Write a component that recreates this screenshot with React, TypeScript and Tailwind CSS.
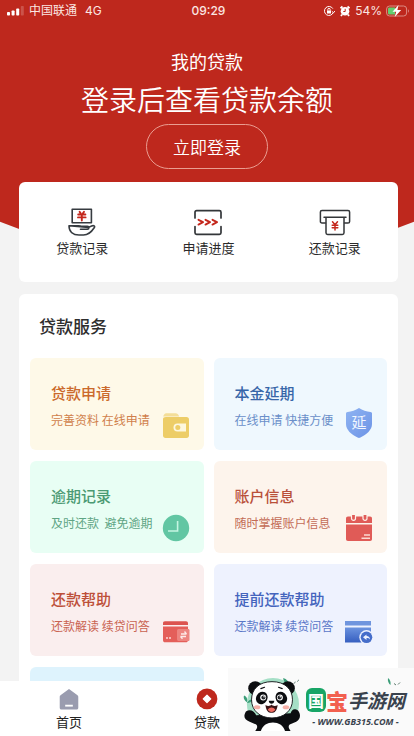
import React from "react";

type Service = {
  title: string;
  desc: string;
  tile: string;
  titleColor: string;
  descColor: string;
  icon: React.ReactNode;
};

const LoanRecordIcon = () => (
  <svg viewBox="0 0 28 28" className="h-7 w-7" fill="none" stroke="#363b40" strokeWidth="1.6" strokeLinejoin="round" strokeLinecap="round">
    <path d="M4.2 14.8V1.2h19.2v13.6z" />
    <path d="M1 17.800h9.500c1.600 0 2 .6 3.200.6h5.800c1.800 0 1.800 2.900 0 2.900h-7M20.600 19.400l3-1.400c2.200-1 3.700.2 2.600 1.800C23.500 24 20.500 27 15.500 27H11C5 27 1 23.800 1 17.800z" />
    <path d="M11.600 3.800l1.200 1.800M16 3.800l-1.200 1.800M10.200 6.500h7.200M10 9.400h7.600M13.800 6.500v6" stroke="#c4281d" strokeWidth="1.900" />
  </svg>
);

const ProgressIcon = () => (
  <svg viewBox="0 0 28 28" className="h-7 w-7" fill="none" stroke="#333639" strokeWidth="1.7" strokeLinecap="round" strokeLinejoin="round">
    <path d="M1 10V4.200c0-1 .6-1.600 1.600-1.600h22.800c1 0 1.600.6 1.600 1.600V10M1 18.500v6.300c0 1 .6 1.600 1.600 1.600h22.800c1 0 1.600-.6 1.600-1.600v-6.300" />
    <path d="M4.500 11.800l4.500 2.400-4.500 2.400M11.500 11.800l4.500 2.400-4.500 2.400M18.500 11.800l4.500 2.400-4.500 2.400" stroke="#c4281d" strokeWidth="1.9" />
  </svg>
);

const RepayRecordIcon = () => (
  <svg viewBox="0 0 32 28" className="h-7 w-8" fill="none" stroke="#333639" strokeWidth="1.500" strokeLinejoin="round" strokeLinecap="round">
    <path d="M6.500 15H3c-1 0-1.600-.6-1.600-1.600V4c0-1 .6-1.600 1.600-1.600h26c1 0 1.600.6 1.600 1.600v9.400c0 1-.6 1.600-1.600 1.600h-3.500" />
    <path d="M5 9.200h22M7 9.200v15.600c0 1 .6 1.600 1.600 1.600h14.800c1 0 1.600-.6 1.600-1.600V9.200" />
    <path d="M13.500 13.800l2.500 3 2.500-3M13.200 17.200h5.600M13.200 19.800h5.600M16 17v5" stroke="#c4281d" strokeWidth="1.500" />
  </svg>
);

const WalletIcon = () => (
  <svg viewBox="0 0 28 28" className="h-7 w-7">
    <path d="M1.200 5.500c.5-2 1.400-3.300 3-3.300h9.400c1.600 0 2.800 1 3.600 3.300z" fill="#f4de98" />
    <path d="M4 6h20.500c1.600 0 2.500.9 2.500 2.500V24.500c0 1.600-.9 2.500-2.500 2.500H3.500C1.900 27 1 26.100 1 24.500V8c0-1.200 1-2 3-2z" fill="#edcd67" />
    <path d="M15.500 12.500H24v8h-8.500a4 4 0 010-8z" fill="#fdf7de" />
    <circle cx="15.800" cy="16.500" r="2.500" fill="#edcd67" />
  </svg>
);

const ShieldIcon = () => (
  <svg viewBox="0 0 28 32" className="h-8 w-7">
    <defs>
      <linearGradient id="shield" x1="0" y1="0" x2="1" y2="1">
        <stop offset="0" stopColor="#8fb4f2" />
        <stop offset="1" stopColor="#6c93e6" />
      </linearGradient>
    </defs>
    <path d="M14 1c3.500 2.200 7.500 3.500 11.500 4 1 .1 1.500.7 1.500 1.600V17c0 6-5.500 10.500-11.600 13.600-1 .5-1.800.5-2.800 0C6.500 27.500 1 23 1 17V6.600C1 5.700 1.500 5.100 2.500 5 6.500 4.500 10.500 3.200 14 1z" fill="url(#shield)" />
    <text x="14" y="21" textAnchor="middle" fontSize="15" fill="#f2f7ff">延</text>
  </svg>
);

const ClockIcon = () => (
  <svg viewBox="0 0 28 28" className="h-7 w-7">
    <circle cx="14" cy="14" r="13.200" fill="#62c6a3" />
    <path d="M15.600 7v10H6" fill="none" stroke="#c5f5e2" strokeWidth="1.600" />
  </svg>
);

const CalendarIcon = () => (
  <svg viewBox="0 0 28 28" className="h-7 w-7">
    <path d="M3 2.500h22c1.300 0 2 .7 2 2V9H1V4.500c0-1.300.7-2 2-2z" fill="#e05b57" />
    <path d="M1 10.500h26V25c0 1.300-.7 2-2 2H3c-1.300 0-2-.7-2-2z" fill="#e05b57" />
    <path d="M6.500 1v3.500c0 2.500 4 2.500 4 0V1M18 1v3.500c0 2.500 4 2.500 4 0V1" fill="#e05b57" stroke="#fdf3ec" strokeWidth="1.200" />
    <path d="M19 21h6M16.500 24.300H25" stroke="#fbd9d2" strokeWidth="1.500" />
  </svg>
);

const CardIcon = () => (
  <svg viewBox="0 0 28 28" className="h-7 w-7">
    <path d="M1 6.500C1 5 1.500 4.200 3 4.200h21c1.200 0 2 .8 2 2.300V8H1z" fill="#dc5450" />
    <path d="M1 9.500h25V23c0 1.500-.8 2.300-2.300 2.300H3.200C1.700 25.300 1 24.500 1 23z" fill="#e45f5a" />
    <path d="M17 12h9c1 0 1.500.6 1.500 1.500v9c0 1-.5 1.500-1.500 1.500h-9c-1.300 0-2-.6-2-2v-8c0-1.400.7-2 2-2z" fill="#ed8580" />
    <path d="M24.500 17H19m3.500-2.500l2 2.500M18.500 19.500H24m-3.500 2.300l-2-2.300" fill="none" stroke="#fdebe8" strokeWidth="1.300" />
    <path d="M4 21h2M7 21h2" stroke="#fbd9d6" strokeWidth="1.400" />
  </svg>
);

const RepayCardIcon = () => (
  <svg viewBox="0 0 28 28" className="h-7 w-7">
    <defs>
      <linearGradient id="repay" x1="0" y1="0" x2="0" y2="1">
        <stop offset="0" stopColor="#6b93df" />
        <stop offset="1" stopColor="#365fc0" />
      </linearGradient>
    </defs>
    <path d="M0 4h26v4.500H0z" fill="#6f95de" />
    <path d="M0 10.500h26V25.500H0z" fill="url(#repay)" />
    <circle cx="21.500" cy="20.300" r="7.200" fill="#eef2ff" />
    <circle cx="21.500" cy="20.300" r="5.800" fill="#456dca" />
    <path d="M21.500 17.500l-3.500 2.700 3.500 2.700v-1.800c1.600 0 2.800.3 3.500 1.500 0-2.500-1.300-3.500-3.500-3.600z" fill="#eef2ff" />
  </svg>
);

const services: Service[] = [
  { title: "贷款申请", desc: "完善资料 在线申请", tile: "bg-[#fef9e8]", titleColor: "text-[#cb6a2c]", descColor: "text-[#d07f4b]", icon: <WalletIcon /> },
  { title: "本金延期", desc: "在线申请 快捷方便", tile: "bg-[#eff8fe]", titleColor: "text-[#3766a8]", descColor: "text-[#6a8fc9]", icon: <ShieldIcon /> },
  { title: "逾期记录", desc: "及时还款  避免逾期", tile: "bg-[#e8fef4]", titleColor: "text-[#4b9a73]", descColor: "text-[#5fa584]", icon: <ClockIcon /> },
  { title: "账户信息", desc: "随时掌握账户信息", tile: "bg-[#fdf4ec]", titleColor: "text-[#b9503a]", descColor: "text-[#c36c57]", icon: <CalendarIcon /> },
  { title: "还款帮助", desc: "还款解读 续贷问答", tile: "bg-[#faeeee]", titleColor: "text-[#bd4f38]", descColor: "text-[#c96351]", icon: <CardIcon /> },
  { title: "提前还款帮助", desc: "还款解读 续贷问答", tile: "bg-[#eef2fe]", titleColor: "text-[#4464bd]", descColor: "text-[#5a77c8]", icon: <RepayCardIcon /> },
];

const quickActions = [
  { label: "贷款记录", icon: <LoanRecordIcon /> },
  { label: "申请进度", icon: <ProgressIcon /> },
  { label: "还款记录", icon: <RepayRecordIcon /> },
];

const StatusBar = () => (
  <div className="grid h-[22px] grid-cols-3 items-center pr-1 pl-[7px] font-['Inter','Noto_Sans_CJK_SC',sans-serif] text-xs text-[#fbe6e2]">
    <div className="flex items-center gap-1">
      <svg viewBox="0 0 18 10" className="h-[10px] w-[18px]" fill="#fff">
        <rect x="0" y="6" width="3" height="3.500" rx=".8" />
        <rect x="4.600" y="4.500" width="3" height="5" rx=".8" />
        <rect x="9.200" y="2.500" width="3" height="7" rx=".8" />
        <rect x="13.800" y="0" width="3" height="9.500" rx=".8" opacity=".2" />
      </svg>
      <span>中国联通</span>
      <span className="ml-1">4G</span>
    </div>
    <span className="text-center font-medium">09:29</span>
    <div className="flex items-center justify-end gap-1">
      <svg viewBox="0 0 12 12" className="h-3 w-3" fill="none" stroke="#fff" strokeWidth="1">
        <path d="M10.200 7.500A4.500 4.500 0 119.800 3.600M8.800 6.200l1.700 1.600L12 6" />
        <rect x="4" y="5.500" width="4" height="3" fill="#fff" stroke="none" />
        <path d="M4.800 5.500V4.600a1.200 1.200 0 012.400 0v.9" />
      </svg>
      <svg viewBox="0 0 12 12" className="h-3 w-3">
        <path d="M1.500 3.200l2-1.700M10.500 3.200l-2-1.700M3 9.500l-1 1.500M9 9.500l1 1.500" stroke="#fff" strokeWidth="1.800" />
        <circle cx="6" cy="6.300" r="4.300" fill="#fff" />
        <path d="M6.200 3.800v2.700H4.300" fill="none" stroke="#be281d" strokeWidth="1" />
      </svg>
      <span>54%</span>
      <svg viewBox="0 0 24 12" className="h-3 w-6">
        <rect x=".6" y="1" width="20" height="10" rx="3" fill="none" stroke="#dd8b84" />
        <path d="M3.500 2.500H9v7H3.500C2.500 9.500 2 9 2 8V4c0-1 .5-1.500 1.500-1.500z" fill="#63cf70" />
        <path d="M22 4.300c1.200.5 1.200 2.900 0 3.400z" fill="#dd8b84" />
        <path d="M12.500 0L6.500 6.800h3.700L8.700 12l6.500-7h-3.800z" fill="#fff" />
      </svg>
    </div>
  </div>
);

const Panda = () => (
  <svg viewBox="0 0 64 58" className="h-[54px] w-[60px] shrink-0">
    <circle cx="33" cy="29" r="28" fill="#a5dfc6" />
    <path d="M5 27c-3-2-4-5-3-7 3 1 4 4 3 7zM5 28c2-3 4-4 6-4-1 3-3 4-6 4zM50 8c-4-1-6-4-6-7 4 1 6 4 6 7z" fill="#3b9d78" />
    <path d="M56 7l1-2M59 5l2-2" stroke="#4c6a5e" strokeWidth=".9" />
    <path d="M4 37c-3 5-2 9 4 11l7 3c2 2 1 4-1 7h38c-2-3-3-5-1-7l7-3c5-3 5-8 2-12-4-3-7-1-8 3L15 41c-2-5-7-7-11-4z" fill="#0c0d10" />
    <path d="M20 58c2-6 7-9 13-9s11 3 13 9z" fill="#fff" />
    <circle cx="14" cy="12" r="7.500" fill="#0c0d10" />
    <circle cx="49" cy="12" r="7.500" fill="#0c0d10" />
    <path d="M32 5c14 0 22 8 22 19.500S45 44 32 44 10 36 10 24.500 18 5 32 5z" fill="#fff" stroke="#17181b" strokeWidth="1" />
    <ellipse cx="21" cy="22.500" rx="6" ry="7" transform="rotate(30 21 22.500)" fill="#0c0d10" />
    <ellipse cx="42" cy="22.500" rx="6" ry="7" transform="rotate(-30 42 22.500)" fill="#0c0d10" />
    <circle cx="22.500" cy="22" r="3.200" fill="#fff" />
    <circle cx="40.500" cy="22" r="3.200" fill="#fff" />
    <circle cx="22.800" cy="22" r="2.200" fill="#25272b" />
    <circle cx="40.200" cy="22" r="2.200" fill="#25272b" />
    <circle cx="23.500" cy="21.300" r=".8" fill="#fff" />
    <circle cx="40.900" cy="21.300" r=".8" fill="#fff" />
    <path d="M20 12.500l4-1.500M39 11l4 1.500" stroke="#0c0d10" strokeWidth="1.200" strokeLinecap="round" />
    <path d="M28.500 25.500h6c0 2-1.500 3.300-3 3.300s-3-1.300-3-3.300z" fill="#0c0d10" />
    <path d="M25 30c2 1.500 5 1.500 6.500-.5 1.500 2 4.500 2 6.500.5-.5 6-3 8.500-6.500 8.500S25.500 36 25 30z" fill="#3a1416" />
    <path d="M27.500 35c2-3 6-3 8 0-1 3.500-7 3.500-8 0z" fill="#ee6a60" />
    <ellipse cx="16" cy="32.500" rx="3.500" ry="2.200" fill="#f7b0a8" />
    <ellipse cx="47" cy="32.500" rx="3.500" ry="2.200" fill="#f7b0a8" />
  </svg>
);

const SiteBadge = () => (
  <div className="absolute right-0 bottom-0 flex h-[68px] w-[186px] items-center gap-1 bg-[#fafafa] pt-1 pl-[14px]">
    <Panda />
    <div className="relative flex flex-col items-center pt-2">
      <div className="flex items-center font-black whitespace-nowrap text-[#39424d]">
        <span className="flex h-6 w-5 items-center justify-center rounded-md bg-[#18a566] text-base leading-6 font-bold text-white">国</span>
        <span className="text-[22px] leading-7 text-[#f2604f]">宝</span>
        <span className="text-[19px] leading-7 font-bold italic">手游网</span>
      </div>
      <span className="font-['Open_Sans','Noto_Sans',sans-serif] text-[9px] leading-4 font-bold whitespace-nowrap text-[#39424d] italic">- WWW.GB315.COM -</span>
      <svg viewBox="0 0 14 8" className="absolute top-0 right-1 h-2 w-[14px]">
        <path d="M1 0c2 1.500 3 4 2.500 7C1.500 5.500.5 3 1 0z" fill="#3b9d78" />
        <path d="M7 5.500l2 1.500M11 6.500l2-2" stroke="#4c6a5e" strokeWidth=".9" />
      </svg>
    </div>
  </div>
);

const App: React.FC = () => {
  return (
    <div className="relative flex h-screen flex-col overflow-hidden bg-[#f3f3f3] font-['Noto_Sans_CJK_SC',sans-serif]">
      <main className="relative min-h-0 flex-1 overflow-hidden">
        {/* Red backdrop that narrows behind the first card */}
        <div className="absolute inset-x-0 top-0 h-[264px] bg-[#be281d] [clip-path:polygon(0_0,100%_0,100%_84%,73%_100%,27%_100%,0_84%)]" />

        <div className="relative">
          <StatusBar />

          <header className="flex flex-col items-center pt-6 text-white">
            <h1 className="text-lg leading-[30px]">我的贷款</h1>
            <p className="text-[28px] leading-[46px] font-[350]">登录后查看贷款余额</p>
            <button className="mt-[2px] h-[45px] rounded-full border border-[#ea9d91] px-[26px] text-[17px] font-[350]">
              立即登录
            </button>
          </header>

          <section className="mt-[13px] mr-4 ml-[19px] grid h-[100px] grid-cols-3 rounded-md bg-white pt-[26px]">
            {quickActions.map((item) => (
              <a key={item.label} href="#" className="flex flex-col items-center text-[13px] leading-5 text-[#2b2b2b]">
                {item.icon}
                <span className="mt-[2px]">{item.label}</span>
              </a>
            ))}
          </section>

          <section className="mt-3 mr-4 ml-[19px] rounded-t-md bg-white px-[11px] pt-5">
            <h2 className="pl-[9px] text-[17px] leading-6 font-medium text-[#2e2e2e]">贷款服务</h2>
            <div className="mt-5 grid grid-cols-2 gap-x-[10px] gap-y-[11px]">
              {services.map((item) => (
                <a key={item.title} href="#" className={`relative h-[92px] rounded-md pt-6 pl-[21px] ${item.tile}`}>
                  <h3 className={`text-[15px] leading-[22px] font-medium ${item.titleColor}`}>{item.title}</h3>
                  <p className={`mt-[6px] text-xs leading-5 whitespace-pre ${item.descColor}`}>{item.desc}</p>
                  <span className="absolute right-[14px] bottom-[11px]">{item.icon}</span>
                </a>
              ))}
              <div className="h-[92px] rounded-md bg-[#def3fd]" />
            </div>
          </section>
        </div>
      </main>

      <nav className="grid h-[55px] grid-cols-3 bg-white text-[13px] leading-5 text-[#222]">
        <a href="#" className="flex flex-col items-center pt-[7px]">
          <svg viewBox="0 0 22 22" className="h-6 w-6">
            <path d="M11 1l7.500 5.500c.7.500 1 1 1 1.800V18c0 1-.6 1.600-1.600 1.600H4.100c-1 0-1.600-.6-1.600-1.600V8.300c0-.8.3-1.300 1-1.800z" fill="#9a9caf" />
            <path d="M7.500 16.200h7" stroke="#fff" strokeWidth="1.700" />
          </svg>
          <span>首页</span>
        </a>
        <a href="#" className="flex flex-col items-center pt-[7px]">
          <svg viewBox="0 0 22 22" className="h-6 w-6">
            <circle cx="11" cy="10" r="9.500" fill="#be281d" />
            <path d="M11 6.500l3.500 3.500-3.500 3.500L7.500 10z" fill="#fff" stroke="#fff" strokeLinejoin="round" />
          </svg>
          <span>贷款</span>
        </a>
      </nav>

      <SiteBadge />
    </div>
  );
};

export default App;
